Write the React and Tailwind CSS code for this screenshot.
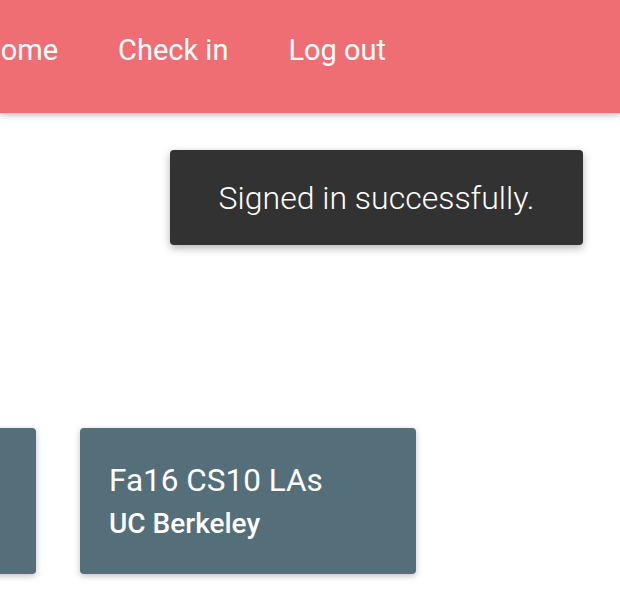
import React from 'react';

const navItems = ['Home', 'Check in', 'Log out'];

const courses = [
    { name: 'Sp16 CS10', school: 'UC Berkeley' },
    { name: 'Fa16 CS10 LAs', school: 'UC Berkeley' },
];

const App = () => {
    return (
        <div className="relative min-h-[613px] w-[620px] overflow-hidden bg-white font-['Roboto',sans-serif]">
            <nav className="h-[113px] bg-[#ef6e73] shadow-[0_2px_5px_rgba(0,0,0,0.18),0_2px_10px_rgba(0,0,0,0.1)]">
                <ul className="flex h-[100px] items-center ml-[-50px]">
                    {navItems.map(item => (
                        <li key={item} className="px-[30px] text-[29px] text-white leading-none">
                            {item}
                        </li>
                    ))}
                </ul>
            </nav>

            {/* toast */}
            <div className="absolute left-[170px] top-[150px] flex h-[95px] w-[413px] items-center justify-center rounded-[4px] bg-[#323232] shadow-[0_3px_8px_rgba(0,0,0,0.3)]">
                <span className="text-[32px] font-light text-white">Signed in successfully.</span>
            </div>

            <div className="mt-[315px] flex gap-[44px] ml-[-300px]">
                {courses.map(c => (
                    <div key={c.name} className="h-[146px] w-[336px] shrink-0 rounded-[4px] bg-[#546e7a] px-[29px] pt-[31px] text-white shadow-[0_2px_6px_rgba(0,0,0,0.25)]">
                        <p className="text-[31.5px] leading-[44px]">{c.name}</p>
                        <p className="mt-[4px] text-[28px] font-medium leading-[34px]">{c.school}</p>
                    </div>
                ))}
            </div>
        </div>
    );
};

export default App;
